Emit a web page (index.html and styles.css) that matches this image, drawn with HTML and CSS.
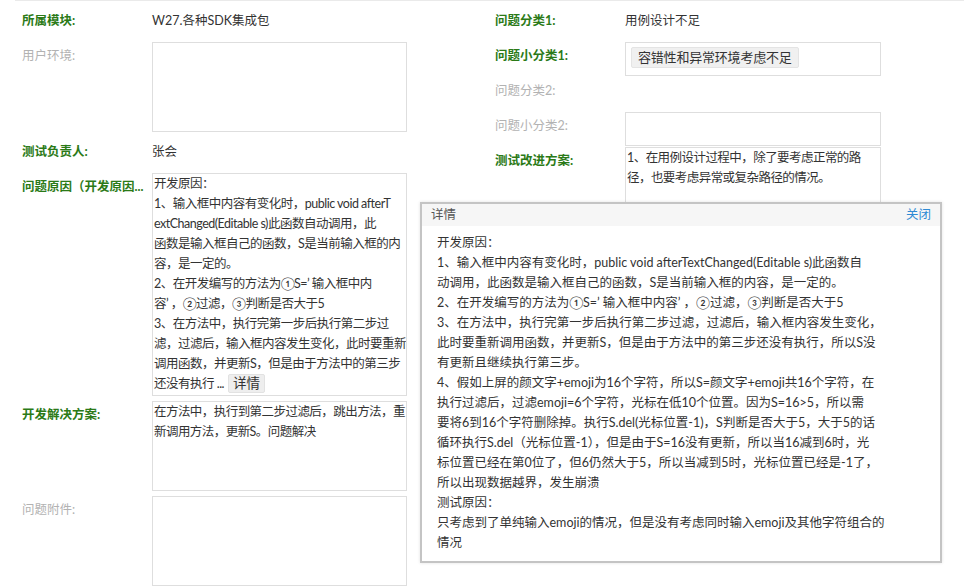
FILE: index.html
```html
<!DOCTYPE html>
<html lang="zh-CN">
<head>
  <meta charset="UTF-8" />
  <title>问题详情</title>
  <link rel="stylesheet" href="styles.css">
</head>
<body>

<div class="page">
  <!-- 左列 -->
  <div class="col col-left">
    <div class="row row-text">
      <div class="label key">所属模块:</div>
      <div class="value">W27.各种SDK集成包</div>
    </div>
    <div class="row row-box">
      <div class="label muted">用户环境:</div>
      <div class="box box-md"></div>
    </div>
    <div class="row row-text">
      <div class="label key">测试负责人:</div>
      <div class="value">张会</div>
    </div>
    <div class="row row-box">
      <div class="label key">问题原因（开发原因...</div>
      <div class="box box-reason">开发原因：<br>
        1、输入框中内容有变化时，public void afterT<br>
        extChanged(Editable s)此函数自动调用，此<br>
        函数是输入框自己的函数，S是当前输入框的内<br>
        容，是一定的。<br>
        2、在开发编写的方法为①S=’ 输入框中内<br>
        容’ ，②过滤，③判断是否大于5<br>
        3、在方法中，执行完第一步后执行第二步过<br>
        滤，过滤后，输入框内容发生变化，此时要重新<br>
        调用函数，并更新S，但是由于方法中的第三步<br>
        还没有执行 ...<button class="more-btn">详情</button></div>
    </div>
    <div class="row row-box">
      <div class="label key">开发解决方案:</div>
      <div class="box box-md">在方法中，执行到第二步过滤后，跳出方法，重新调用方法，更新S。问题解决</div>
    </div>
    <div class="row row-box">
      <div class="label muted">问题附件:</div>
      <div class="box box-md"></div>
    </div>
  </div>

  <!-- 右列 -->
  <div class="col col-right">
    <div class="row row-text">
      <div class="label key">问题分类1:</div>
      <div class="value">用例设计不足</div>
    </div>
    <div class="row row-box">
      <div class="label key">问题小分类1:</div>
      <div class="box box-sm"><span class="tag">容错性和异常环境考虑不足</span></div>
    </div>
    <div class="row row-text row-empty">
      <div class="label muted">问题分类2:</div>
      <div class="value"></div>
    </div>
    <div class="row row-box">
      <div class="label muted">问题小分类2:</div>
      <div class="box box-sm"></div>
    </div>
    <div class="row row-box row-close">
      <div class="label key">测试改进方案:</div>
      <div class="box box-md">1、在用例设计过程中，除了要考虑正常的路径，也要考虑异常或复杂路径的情况。</div>
    </div>
  </div>

  <!-- 详情弹窗 -->
  <div class="dialog">
    <div class="dialog-head">
      <span>详情</span>
      <a class="dialog-close">关闭</a>
    </div>
    <div class="dialog-body">
      开发原因：<br>
      1、输入框中内容有变化时，public void afterTextChanged(Editable s)此函数自<br>
      动调用，此函数是输入框自己的函数，S是当前输入框的内容，是一定的。<br>
      2、在开发编写的方法为①S=’ 输入框中内容’ ，②过滤，③判断是否大于5<br>
      3、在方法中，执行完第一步后执行第二步过滤，过滤后，输入框内容发生变化，<br>
      此时要重新调用函数，并更新S，但是由于方法中的第三步还没有执行，所以S没<br>
      有更新且继续执行第三步。<br>
      4、假如上屏的颜文字+emoji为16个字符，所以S=颜文字+emoji共16个字符，在<br>
      执行过滤后，过滤emoji=6个字符，光标在低10个位置。因为S=16&gt;5，所以需<br>
      要将6到16个字符删除掉。执行S.del(光标位置-1)，S判断是否大于5，大于5的话<br>
      循环执行S.del（光标位置-1），但是由于S=16没有更新，所以当16减到6时，光<br>
      标位置已经在第0位了，但6仍然大于5，所以当减到5时，光标位置已经是-1了，<br>
      所以出现数据越界，发生崩溃<br>
      测试原因：<br>
      只考虑到了单纯输入emoji的情况，但是没有考虑同时输入emoji及其他字符组合的<br>
      情况
    </div>
  </div>
</div>

</body>
</html>
```

FILE: styles.css
```css
body {
  margin: 0;
  background-color: #fff;
  color: #333;
  font-family: Lato, "Noto Sans CJK SC", sans-serif;
  font-size: 12.5px;
  text-autospace: no-autospace;
}

.page {
  position: relative;
  height: 587px;
  margin-left: 15px;
  border-top: 1px solid #eaeaea;
  display: flex;
  padding-left: 7px;
}

.col-left {
  width: 385px;
  flex: none;
}

.col-right {
  margin-left: 88px;
  width: 386px;
  flex: none;
}

.row {
  display: flex;
  align-items: flex-start;
}

.row-text {
  margin-top: 10px;
  line-height: 20px;
}

.row-text + .row-box {
  margin-top: 11px;
}

.row-box + .row-text {
  margin-top: 10px;
}

.row-box + .row-box {
  margin-top: 5px;
}

.row-box + .row-empty {
  margin-top: 5px;
}

.row-box + .row-close {
  margin-top: 1px;
}

.label {
  width: 130px;
  flex: none;
  line-height: 20px;
  white-space: nowrap;
}

.row-box .label {
  padding-top: 4px;
}

.label.key {
  color: #2b7a17;
  font-weight: bold;
}

.label.muted {
  color: #b2b2b2;
}

.value {
  min-height: 20px;
}

.box {
  box-sizing: border-box;
  width: 255px;
  flex: none;
  border: 1px solid #dedede;
  padding: 0 0 0 1px;
  line-height: 20px;
  letter-spacing: -0.55px;
  word-break: break-all;
  overflow: hidden;
}

.col-right .box {
  width: 256px;
}

.box-md {
  height: 90px;
}

.box-sm {
  height: 34px;
  padding: 4px 5px;
}

.box-reason {
  height: 223px;
  white-space: nowrap;
  letter-spacing: -0.5px;
}

.tag {
  display: inline-block;
  padding: 0 6px;
  height: 19px;
  line-height: 19px;
  font-size: 13px;
  letter-spacing: -0.2px;
  background-color: #f0f0f0;
  border: 1px solid #e4e4e4;
  border-radius: 2px;
}

.more-btn {
  font-family: inherit;
  font-size: 13.5px;
  color: #333;
  height: 19px;
  line-height: 17px;
  margin-left: 4px;
  padding: 0 4px;
  background-color: #eee;
  border: 1px solid #e2e2e2;
  border-radius: 2px;
  vertical-align: top;
}

/* 弹窗 */
.dialog {
  position: absolute;
  left: 405px;
  top: 201px;
  width: 522px;
  height: 361px;
  box-sizing: border-box;
  background-color: #fff;
  border: 2px solid #c4c4c4;
  box-shadow: 0 0 3px rgba(0, 0, 0, 0.12);
}

.dialog-head {
  display: flex;
  justify-content: space-between;
  height: 22px;
  line-height: 22px;
  padding: 0 9px;
  background-color: #f6f6f6;
  color: #555;
}

.dialog-close {
  color: #2f8ad4;
  cursor: pointer;
}

.dialog-body {
  padding: 7px 15px;
  line-height: 20px;
  white-space: nowrap;
  color: #333;
}
```
